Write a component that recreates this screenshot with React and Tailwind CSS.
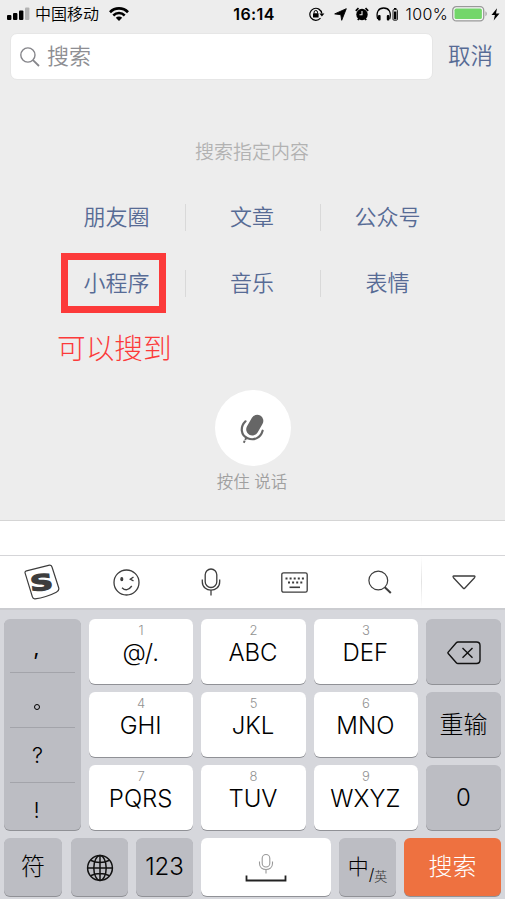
import React from "react";

const categories = ["朋友圈", "文章", "公众号", "小程序", "音乐", "表情"];

const letterKeys = [
  { num: "1", label: "@/." },
  { num: "2", label: "ABC" },
  { num: "3", label: "DEF" },
  { num: "4", label: "GHI" },
  { num: "5", label: "JKL" },
  { num: "6", label: "MNO" },
  { num: "7", label: "PQRS" },
  { num: "8", label: "TUV" },
  { num: "9", label: "WXYZ" },
];

const StatusBar = () => (
  <div className="h-[28px] flex items-center pl-[7px] pr-[5px] text-black">
    <div className="flex-1 flex items-center">
      <svg width="23" height="14" viewBox="0 0 23 14">
        <rect x="0" y="8" width="4.4" height="5" rx="1" />
        <rect x="6" y="6" width="4.4" height="7" rx="1" />
        <rect x="12" y="3.5" width="4.4" height="9.5" rx="1" />
        <rect x="18" y="0.5" width="4.4" height="12.5" rx="1" fill="#b3b3b3" />
      </svg>
      <span className="ml-[5px] text-[16px] leading-[24px]">中国移动</span>
      <svg className="ml-[10px]" width="20" height="14" viewBox="0 0 20 14">
        <path d="M1 5.2a12.6 12.6 0 0 1 18 0" fill="none" stroke="#000" strokeWidth="2.7" />
        <path d="M4.3 8.5a8 8 0 0 1 11.4 0" fill="none" stroke="#000" strokeWidth="2.5" />
        <path d="M6.8 10.8a4.5 4.5 0 0 1 6.4 0L10 14z" />
      </svg>
    </div>
    <span className="pl-px text-[16px] font-semibold tracking-[0.4px]">16:14</span>
    <div className="flex-1 flex items-center justify-end">
      <svg className="shrink-0" width="16" height="14" viewBox="0 0 16 14">
        <path d="M11.5 11.1A6 6 0 1 1 12.8 6.5" fill="none" stroke="#000" strokeWidth="1.2" />
        <path d="M10.4 6.4h5l-2.5 3.2z" />
        <rect x="4" y="6.2" width="5.6" height="4.2" rx="0.5" />
        <path d="M5.1 6.5V5.2a1.7 1.7 0 0 1 3.4 0v1.3" fill="none" stroke="#000" strokeWidth="1" />
      </svg>
      <svg className="ml-[9px] shrink-0" width="13" height="13" viewBox="0 0 13 13">
        <path d="M12.3.7 7.7 12.3 6.8 6.7.7 5.900z" stroke="#000" strokeWidth="0.9" strokeLinejoin="round" />
      </svg>
      <svg className="ml-[8px] shrink-0" width="14" height="14" viewBox="0 0 14 14">
        <circle cx="7" cy="7.5" r="5.7" />
        <path d="M.8 3.8 3.5 1.2M13.2 3.8l-2.7-2.6M2.8 13l1.5-1.7M11.2 13l-1.5-1.7" stroke="#000" strokeWidth="1.7" />
        <path d="M7 4v3.8H4.5" fill="none" stroke="#ededed" strokeWidth="1.1" />
      </svg>
      <svg className="ml-[7px] shrink-0" width="23" height="14" viewBox="0 0 23 14">
        <path d="M1.7 12C-.2 5.2 2.4 1 7.7 1s7.9 4.2 6 11" fill="none" stroke="#000" strokeWidth="1.3" />
        <rect x="2" y="8" width="2.6" height="5.4" rx="1" />
        <rect x="10.8" y="8" width="2.6" height="5.4" rx="1" />
        <rect x="17" y="2.6" width="4.4" height="10.6" rx="0.9" fill="none" stroke="#000" strokeWidth="0.9" />
        <path d="M18 1h2.4v1H18zM18 4.5h2.4v7.8H18z" />
      </svg>
      <span className="ml-[7px] text-[16px] tracking-[0.35px]">100%</span>
      <svg className="ml-[4px] shrink-0" width="35" height="16" viewBox="0 0 35 16">
        <rect x="0.7" y="0.7" width="31" height="14.2" rx="3.6" fill="#f7f7f7" stroke="#999" strokeWidth="1.3" />
        <rect x="2.5" y="2.5" width="27.4" height="10.6" rx="1.7" fill="#73d66a" />
        <path d="M33.5 5.3c1.6.8 1.6 4.2 0 5z" fill="#999" />
      </svg>
      <svg className="ml-[4px] shrink-0" width="9" height="13" viewBox="0 0 9 13">
        <path d="M6 .2.5 7.1h3.4L2.7 12.6 8.5 5.5H5z" />
      </svg>
    </div>
  </div>
);

const SearchBar = () => (
  <div className="flex items-center pt-[5px] pl-[10px]">
    <div className="w-[423px] h-[47px] rounded-[7px] bg-white border border-[#e6e6e6] flex items-center pl-[9px]">
      <svg width="20" height="20" viewBox="0 0 20 20" fill="none" stroke="#85858a" strokeWidth="1.4">
        <circle cx="7.9" cy="8" r="7.1" />
        <path d="m13 13.2 6 5.8" strokeWidth="1.8" />
      </svg>
      <span className="ml-[7px] -mt-[2px] text-[22px] leading-[32px] text-[#8e8e93]">搜索</span>
    </div>
    <span className="ml-[15px] -mt-[2px] text-[22.5px] leading-[32px] text-[#576b95]">取消</span>
  </div>
);

const VoiceButton = () => (
  <div className="flex flex-col items-center">
    <div className="w-[76px] h-[76px] rounded-full bg-white flex items-center justify-center">
      <svg className="mt-[1px]" width="26" height="32" viewBox="0 0 26 32">
        <rect x="8.7" y="1" width="12.2" height="22" rx="6.1" transform="rotate(30 14.5 12)" fill="#666" />
        <path d="M5.5 8.3C-.3 14 .9 22.500 7.600 25.200c6.500 2.800 13.100-.5 15-7.500" fill="none" stroke="#666" strokeWidth="2.2" strokeLinecap="round" />
        <path d="m6.7 24-3 5.8" fill="none" stroke="#666" strokeWidth="1.9" strokeDasharray="3.4 0.8" />
      </svg>
    </div>
    <span className="mt-[4px] mr-px text-[16.5px] leading-[24px] text-[#a0a0a0]">按住 说话</span>
  </div>
);

const Toolbar = () => (
  <div className="h-[53px] bg-white border-t border-[#d5d5d8] flex items-center text-[#3d3d3d]">
    <div className="w-[83px] flex justify-center">
      <svg width="36" height="36" viewBox="0 0 36 36">
        <path d="M2.5 6.9 24.5 1.3q2.7-.7 3.5 1.7L34.6 23.5q1 3.2-2.3 4.7Q22 33.5 11 34.8q-2 .2-2.600-1.900L1.200 9.400q-.7-2 1.300-2.500z" fill="none" stroke="currentColor" strokeWidth="1.2" />
        <text
          x="0"
          y="0"
          transform="translate(18.1 26.2) rotate(-5) scale(1.45 1)"
          textAnchor="middle"
          fontSize="22"
          className="font-bold font-['DejaVu_Sans',sans-serif]"
          fill="currentColor"
          stroke="currentColor"
          strokeWidth="1.2"
        >
          S
        </text>
      </svg>
    </div>
    <div className="w-[86px] flex justify-center">
      <svg width="27" height="27" viewBox="0 0 27 27" fill="none" stroke="currentColor" strokeWidth="1.3">
        <circle cx="13.5" cy="13.5" r="12.5" />
        <ellipse cx="8.8" cy="10.2" rx="0.9" ry="1.5" fill="currentColor" />
        <path d="m20.5 8-3.2 2.2 3.2 1.7M9 18.7q5 4.8 9.8-1.7" />
      </svg>
    </div>
    <div className="w-[84px] flex justify-center">
      <svg width="20" height="28" viewBox="0 0 20 28" fill="none" stroke="currentColor" strokeWidth="1.3">
        <rect x="4.2" y="1" width="11.6" height="18.5" rx="5.8" />
        <path d="M1.3 11.5v2.2c0 11.2 17.4 11.2 17.4 0v-2.2M10 22v5.5" />
      </svg>
    </div>
    <div className="w-[83px] flex justify-center">
      <svg width="27" height="21" viewBox="0 0 27 21" fill="none" stroke="currentColor">
        <rect x="0.8" y="0.8" width="25.4" height="19.4" rx="1.8" strokeWidth="1.3" />
        <path d="M4.5 6.500h18.500" strokeWidth="2" strokeDasharray="2 2.1" />
        <path d="M7 10.500h14.500" strokeWidth="2" strokeDasharray="2 2.1" />
        <path d="M8.500 15.300h10.500" strokeWidth="1.6" />
      </svg>
    </div>
    <div className="w-[85px] flex justify-center pl-[3px]">
      <svg width="24" height="24" viewBox="0 0 24 24" fill="none" stroke="currentColor">
        <circle cx="10.3" cy="10.5" r="9.4" strokeWidth="1.2" />
        <path d="m16.8 17.2 6 5.8" strokeWidth="2" />
      </svg>
    </div>
    <div className="w-px h-full bg-linear-to-b from-white via-[#e3e3e3] to-white" />
    <div className="flex-1 flex items-center justify-center">
      <svg width="24" height="15" viewBox="0 0 24 15" fill="none" stroke="currentColor" strokeWidth="1.3">
        <path d="M2 1h20q1.7.2.5 1.7L12.7 13.2q-.7.7-1.4 0L1.5 2.7Q.3 1.2 2 1z" />
      </svg>
    </div>
  </div>
);

const Key = ({ className = "", children }) => (
  <div className={`rounded-[6px] shadow-[0_1px_0_#909196] flex items-center justify-center text-black ${className}`}>
    {children}
  </div>
);

const Keyboard = () => (
  <div className="h-[291px] bg-[#d6d7dc] border-t-2 border-[#cbccd0] pt-[9px] pl-[4px] pr-[4px] font-light">
    <div className="grid grid-cols-[77px_329px_75px] gap-x-[8px]">
      <div className="h-[211px] rounded-[6px] bg-[#bcbdc3] shadow-[0_1px_0_#909196] px-[6px] text-[22px] text-black">
        <div className="h-[54px] border-b border-[#a3a4aa] flex items-center justify-center pr-[12px] pt-[3px] font-normal">,</div>
        <div className="h-[55px] border-b border-[#a3a4aa] flex items-center justify-center pt-[10px] pr-[12px]">
          <span className="w-[6px] h-[6px] rounded-full border border-black mt-[3px]" />
        </div>
        <div className="h-[55px] border-b border-[#a3a4aa] flex items-center justify-center pt-[1px] pr-[10px]">?</div>
        <div className="h-[47px] flex items-center justify-center pt-[8px] pr-[12px]">!</div>
      </div>
      <div className="grid grid-cols-3 grid-rows-[65px_65px_65px] gap-[8px]">
        {letterKeys.map((key) => (
          <Key key={key.num} className="bg-white flex-col !justify-start pt-[3px]">
            <span className="text-[13px] leading-[17px] text-[#929292]">{key.num}</span>
            <span className="-mt-[0.5px] pr-px text-[24px] leading-[28px]">{key.label}</span>
          </Key>
        ))}
      </div>
      <div className="grid grid-rows-[65px_65px_65px] gap-[8px]">
        <Key className="bg-[#bcbdc3]">
          <svg className="mt-[2px]" width="34" height="24" viewBox="0 0 34 24" fill="none" stroke="#111" strokeWidth="1.4">
            <path d="M11 1h18.500q3.500 0 3.500 3.500v14.500q0 3.500-3.500 3.500H11q-1 0-1.700-.8L1.200 12.500q-.6-.7 0-1.400L9.300 1.800Q10 1 11 1z" />
            <path d="m15.500 7 10 9.800M25.500 7l-10 9.800" />
          </svg>
        </Key>
        <Key className="bg-[#bcbdc3] text-[24px]">重输</Key>
        <Key className="bg-[#bcbdc3] text-[24px]">0</Key>
      </div>
    </div>
    <div className="mt-[8px] h-[58px] flex">
      <Key className="w-[58px] bg-[#bcbdc3] text-[24px] pb-px">符</Key>
      <Key className="w-[57px] ml-[9px] bg-[#bcbdc3]">
        <svg className="mt-[1px]" width="28" height="28" viewBox="0 0 28 28" fill="none" stroke="#111" strokeWidth="1.5">
          <circle cx="14" cy="14" r="12.4" />
          <ellipse cx="14" cy="14" rx="6.2" ry="12.4" />
          <path d="M14 1.500v25M1.500 14h25M4.500 6.200q9.500 4.500 19 0M4.500 21.800q9.500-4.500 19 0" />
        </svg>
      </Key>
      <Key className="w-[57px] ml-[8px] bg-[#bcbdc3] text-[24px]">123</Key>
      <Key className="w-[130px] ml-[8px] bg-white flex-col">
        <svg className="mt-[1px]" width="42" height="30" viewBox="0 0 42 30" fill="none">
          <rect x="17.2" y="1.5" width="7.6" height="12.5" rx="3.8" stroke="#999" strokeWidth="1.1" />
          <path d="M14.5 8.500v2c0 8 13 8 13 0v-2M21 16.500v4" stroke="#999" strokeWidth="1.1" />
          <path d="M1.500 22.500v5h39v-5" stroke="#222" strokeWidth="1.8" />
        </svg>
      </Key>
      <Key className="w-[57px] ml-[8px] bg-[#bcbdc3]">
        <span className="text-[21px]">中</span>
        <span className="mt-[14px] text-[16px] leading-[20px]">/</span>
        <span className="mt-[18px] text-[13px] leading-[20px] text-[#333]">英</span>
      </Key>
      <Key className="w-[97px] ml-[8px] bg-[#ee7140] text-[24px] !text-white">搜索</Key>
    </div>
  </div>
);

const App = () => {
  return (
    <div className="w-[505px] h-[899px] overflow-hidden bg-white font-[350] font-[Inter,'Noto_Sans_CJK_SC',sans-serif]">
      <div className="h-[521px] bg-[#ededed] border-b border-[#d5d5d5]">
        <StatusBar />
        <SearchBar />
        <p className="mt-[59px] pr-px text-center text-[19px] leading-[28px] text-[#b2b2b2]">搜索指定内容</p>
        <div className="relative mt-[17px] ml-[50px] mr-[49px] grid grid-cols-[136px_135px_135px]">
          {categories.map((name, i) => (
            <div key={name} className="h-[66px] flex items-center">
              <span className="flex-1 pr-[2px] text-center text-[22px] leading-[32px] text-[#576b95]">{name}</span>
              {i % 3 !== 2 && <span className="w-px h-[27px] bg-[#d9d9d9]" />}
            </div>
          ))}
          {/* highlight around the mini program entry */}
          <div className="absolute left-[11px] top-[69px] w-[105px] h-[60px] border-[7px] border-[#fc3a3a]" />
          <span className="absolute left-[7px] top-[143px] text-[28.7px] leading-[44px] text-[#fc3a3a] font-extralight">可以搜到</span>
        </div>
        <div className="mt-[74px]">
          <VoiceButton />
        </div>
      </div>
      <div className="h-[34px] bg-white" />
      <Toolbar />
      <Keyboard />
    </div>
  );
};

export default App;
